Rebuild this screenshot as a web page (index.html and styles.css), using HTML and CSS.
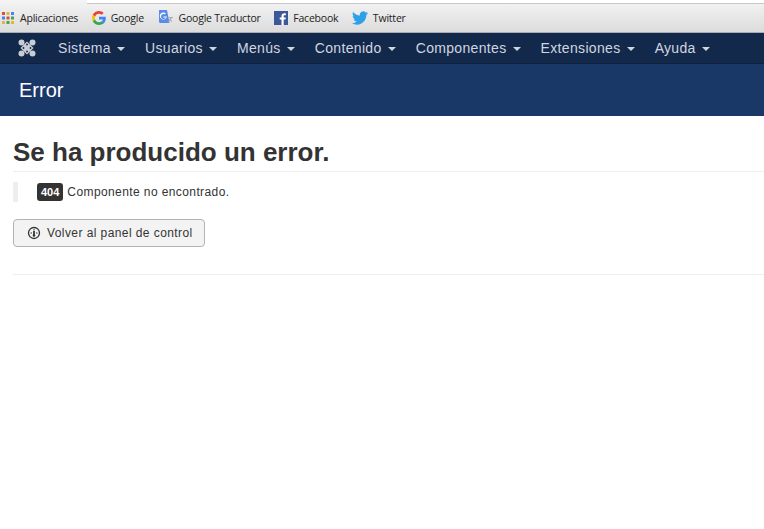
FILE: index.html
```html
<!DOCTYPE html>
<html lang="es">
<head>
    <meta charset="UTF-8">
    <meta name="viewport" content="width=device-width, initial-scale=1.0">
    <title>Error</title>
    <link rel="stylesheet" href="styles.css">
</head>
<body>

    <!-- Bookmarks -->
    <div class="bookmarks">
        <div class="url-edge"></div>
        <div class="bookmark-row">
            <a class="bookmark">
                <svg class="apps" width="14" height="14" viewBox="0 0 14 14">
                    <rect x="1" y="1" width="3" height="3" fill="#d9503f"/><rect x="5.5" y="1" width="3" height="3" fill="#e8b33a"/><rect x="10" y="1" width="3" height="3" fill="#4285f4"/>
                    <rect x="1" y="5.5" width="3" height="3" fill="#4285f4"/><rect x="5.5" y="5.5" width="3" height="3" fill="#d9503f"/><rect x="10" y="5.5" width="3" height="3" fill="#3fa45b"/>
                    <rect x="1" y="10" width="3" height="3" fill="#e8b33a"/><rect x="5.5" y="10" width="3" height="3" fill="#3fa45b"/><rect x="10" y="10" width="3" height="3" fill="#e8b33a"/>
                </svg>
                Aplicaciones
            </a>
            <a class="bookmark">
                <svg width="14" height="14" viewBox="4 4 40 40">
                    <path fill="#ea4335" d="M24 12c3 0 5.600 1 7.700 3l5.600-5.600C33.800 6.200 29.300 4 24 4 16.200 4 9.500 8.500 6.200 15l6.600 5.100C14.400 15.400 18.800 12 24 12z"/>
                    <path fill="#4285f4" d="M43.500 24.500c0-1.600-.1-2.800-.4-4.100H24v7.600h11.100c-.5 2.700-2 5-4.300 6.500l6.500 5.100c3.800-3.500 6.200-8.700 6.200-15.100z"/>
                    <path fill="#fbbc05" d="M12.800 28.100c-.4-1.300-.7-2.700-.7-4.100s.3-2.800.7-4.100L6.200 15C4.800 17.700 4 20.800 4 24s.8 6.300 2.200 9l6.600-4.900z"/>
                    <path fill="#34a853" d="M24 44c5.400 0 9.900-1.800 13.300-4.800l-6.500-5.100c-1.800 1.200-4.100 2-6.800 2-5.200 0-9.600-3.500-11.200-8.100L6.200 33C9.500 39.500 16.200 44 24 44z"/>
                </svg>
                Google
            </a>
            <a class="bookmark">
                <svg width="16" height="16" viewBox="0 0 16 16">
                    <path fill="#5a8be6" d="M1 0h8l2.500 13H2.500A1.500 1.500 0 0 1 1 11.500z"/>
                    <path fill="#a9adb5" d="M10 7h5v1h-1.200a5 5 0 0 1-1 2l1.500 1.300-.6.700-1.500-1.300-1.500 1.300-.6-.7 1.400-1.300a5 5 0 0 1-.8-1h1.100a3 3 0 0 0 .6-1H10z"/>
                    <path fill="#fff" d="M5.500 4a2.500 2.500 0 1 0 2.300 3.400H5.500v-1h3.300a3.500 3.500 0 1 1-1-2.900l-.7.700A2.500 2.500 0 0 0 5.500 4z"/>
                </svg>
                Google Traductor
            </a>
            <a class="bookmark">
                <svg width="14" height="14" viewBox="0 0 14 14">
                    <rect width="14" height="14" fill="#3b5998"/>
                    <path fill="#fff" d="M9.700 14V8.600h1.800l.3-2.100H9.700V5.200c0-.6.200-1 1-1h1.100V2.300c-.2 0-.9-.1-1.600-.1-1.600 0-2.700 1-2.700 2.800v1.500H5.700v2.100h1.800V14z"/>
                </svg>
                Facebook
            </a>
            <a class="bookmark">
                <svg width="16" height="14" viewBox="0 0 24 20">
                    <path fill="#2da1e8" d="M24 2.400c-.9.400-1.800.7-2.800.8 1-.6 1.800-1.600 2.200-2.700-1 .6-2 1-3.100 1.200A4.900 4.900 0 0 0 11.900 6.200C7.800 6 4.200 4 1.700.9.400 3.200 1 6.100 3.200 7.500c-.8 0-1.600-.2-2.200-.6 0 2.300 1.600 4.400 3.900 4.900-.7.200-1.500.2-2.200.1.600 2 2.400 3.400 4.600 3.400A9.900 9.900 0 0 1 0 17.800 14 14 0 0 0 7.500 20c9.100 0 14.300-7.700 14-14.600 1-.7 1.800-1.600 2.500-3z"/>
                </svg>
                Twitter
            </a>
        </div>
    </div>

    <!-- Main menu -->
    <nav class="navbar">
        <svg class="brand" width="18" height="18" viewBox="0 0 18 18">
            <g fill="#c9ced6">
                <circle cx="3.500" cy="3.500" r="3"/><circle cx="14.500" cy="3.500" r="3"/>
                <circle cx="3.500" cy="14.500" r="3"/><circle cx="14.500" cy="14.500" r="3"/>
                <path d="M9 2.500L15.500 9 9 15.500 2.500 9z"/>
            </g>
            <g fill="#13294b">
                <circle cx="9" cy="5.500" r=".9"/><circle cx="9" cy="12.500" r=".9"/>
                <circle cx="5.500" cy="9" r=".9"/><circle cx="12.500" cy="9" r=".9"/>
            </g>
        </svg>
        <ul class="menu">
            <li>Sistema <span class="caret"></span></li>
            <li>Usuarios <span class="caret"></span></li>
            <li>Menús <span class="caret"></span></li>
            <li>Contenido <span class="caret"></span></li>
            <li>Componentes <span class="caret"></span></li>
            <li>Extensiones <span class="caret"></span></li>
            <li>Ayuda <span class="caret"></span></li>
        </ul>
    </nav>

    <header class="subhead">
        <h1>Error</h1>
    </header>

    <!-- Error message -->
    <main class="content">
        <h2>Se ha producido un error.</h2>
        <blockquote>
            <span class="badge">404</span> Componente no encontrado.
        </blockquote>
        <button class="btn">
            <svg width="14" height="14" viewBox="0 0 14 14">
                <circle cx="7" cy="7" r="5.500" fill="none" stroke="#333" stroke-width="1.300"/>
                <path d="M7 3v1.500M3.500 7H5M9 7h1.500" stroke="#333" stroke-width="1"/>
                <path d="M7 5v4" stroke="#333" stroke-width="1.800"/>
                <circle cx="7" cy="9.500" r="1.300" fill="#333"/>
            </svg>
            Volver al panel de control
        </button>
        <hr>
    </main>

</body>
</html>
```

FILE: styles.css
```css
* {
    box-sizing: border-box;
}
body {
    margin: 0;
    font-family: "Liberation Sans", Arial, sans-serif;
    font-size: 12px;
    color: #333;
    background-color: #fff;
    overflow: hidden;
}
.bookmarks {
    height: 33px;
    background: linear-gradient(#f4f4f4, #dcdcdc);
    border-bottom: 1px solid #a9adb3;
}
.url-edge {
    height: 4px;
    margin-left: 87px;
    background-color: #fff;
    border-bottom: 1px solid #c8c8c8;
}
.bookmark-row {
    display: flex;
    align-items: center;
    gap: 13.500px;
    height: 28px;
    padding-left: 1px;
}
.bookmark {
    display: flex;
    align-items: center;
    gap: 5px;
    font-family: "Open Sans", sans-serif;
    font-size: 10.500px;
    letter-spacing: -0.2px;
    color: #222;
}
.navbar {
    display: flex;
    align-items: center;
    height: 31px;
    background-color: #13294b;
    border-bottom: 1px solid #0f2140;
    padding-left: 18px;
}
.brand {
    flex: none;
}
.menu {
    display: flex;
    gap: 19.900px;
    margin: 0 0 0 22px;
    padding: 0;
    list-style: none;
    font-size: 14px;
    letter-spacing: 0.33px;
    color: #d0d6e0;
}
.menu li {
    white-space: nowrap;
}
.caret {
    display: inline-block;
    width: 0;
    height: 0;
    margin-left: 2px;
    vertical-align: middle;
    border-top: 4px solid #d0d6e0;
    border-left: 4px solid transparent;
    border-right: 4px solid transparent;
}
.subhead {
    height: 52px;
    background-color: #1a3867;
    display: flex;
    align-items: center;
    padding-left: 19px;
}
.subhead h1 {
    margin: 0;
    font-size: 20px;
    font-weight: normal;
    color: #fff;
}
.content {
    padding-left: 13px;
}
.content h2 {
    margin: 0;
    padding: 21px 0 3px;
    font-size: 26px;
    line-height: 31px;
    font-weight: bold;
    color: #333;
    border-bottom: 1px solid #eee;
}
blockquote {
    margin: 10px 0 17px;
    height: 20px;
    padding-left: 19px;
    border-left: 5px solid #eee;
    display: flex;
    align-items: center;
    gap: 4px;
    letter-spacing: 0.4px;
}
.badge {
    background-color: #333;
    color: #fff;
    font-size: 11px;
    font-weight: bold;
    letter-spacing: 0;
    padding: 2px 4px;
    border-radius: 3px;
    line-height: 14px;
}
.btn {
    display: flex;
    align-items: center;
    gap: 6px;
    width: 192px;
    height: 28px;
    padding: 0 0 0 13px;
    font-family: inherit;
    font-size: 12px;
    letter-spacing: 0.42px;
    color: #333;
    background-color: #f3f3f3;
    border: 1px solid #b3b3b3;
    border-radius: 4px;
}
hr {
    margin: 27px 0 0;
    border: 0;
    border-top: 1px solid #eee;
}
```
